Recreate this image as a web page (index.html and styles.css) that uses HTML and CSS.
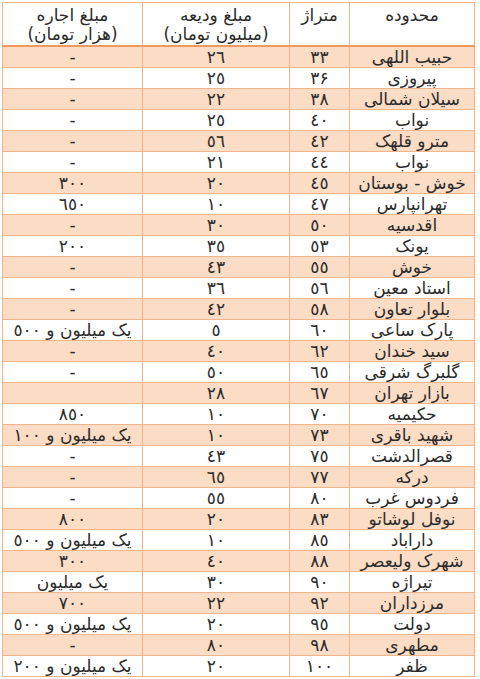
FILE: index.html
```html
<!DOCTYPE html>
<html lang="fa" dir="rtl">
<head>
<meta charset="utf-8">
<link rel="stylesheet" href="styles.css">
</head>
<body>
<table class="prices">
<colgroup>
<col class="c-region"><col class="c-size"><col class="c-dep"><col class="c-rent">
</colgroup>
<thead>
<tr class="head">
<th>محدوده</th>
<th>متراژ</th>
<th>مبلغ ودیعه<br>(میلیون تومان)</th>
<th>مبلغ اجاره<br>(هزار تومان)</th>
</tr>
</thead>
<tbody>
<tr><td>حبیب اللهی</td><td>٣٣</td><td>٢٦</td><td>-</td></tr>
<tr><td>پیروزی</td><td>٣۶</td><td>٢٥</td><td>-</td></tr>
<tr><td>سیلان شمالی</td><td>٣٨</td><td>٢٢</td><td>-</td></tr>
<tr><td>نواب</td><td>٤٠</td><td>٢٥</td><td>-</td></tr>
<tr><td>مترو قلهک</td><td>٤٢</td><td>٥٦</td><td>-</td></tr>
<tr><td>نواب</td><td>٤٤</td><td>٢١</td><td>-</td></tr>
<tr><td>خوش - بوستان</td><td>٤٥</td><td>٢٠</td><td>٣٠٠</td></tr>
<tr><td>تهرانپارس</td><td>٤٧</td><td>١٠</td><td>٦٥٠</td></tr>
<tr><td>اقدسیه</td><td>٥٠</td><td>٣٠</td><td>-</td></tr>
<tr><td>یونک</td><td>٥٣</td><td>٣٥</td><td>٢٠٠</td></tr>
<tr><td>خوش</td><td>٥٥</td><td>٤٣</td><td>-</td></tr>
<tr><td>استاد معین</td><td>٥٦</td><td>٣٦</td><td>-</td></tr>
<tr><td>بلوار تعاون</td><td>٥٨</td><td>٤٢</td><td>-</td></tr>
<tr><td>پارک ساعی</td><td>٦٠</td><td>٥</td><td>یک میلیون و ٥٠٠</td></tr>
<tr><td>سید خندان</td><td>٦٢</td><td>٤٠</td><td>-</td></tr>
<tr><td>گلبرگ شرقی</td><td>٦٥</td><td>٥٠</td><td>-</td></tr>
<tr><td>بازار تهران</td><td>٦٧</td><td>٢٨</td><td></td></tr>
<tr><td>حکیمیه</td><td>٧٠</td><td>١٠</td><td>٨٥٠</td></tr>
<tr><td>شهید باقری</td><td>٧٣</td><td>١٠</td><td>یک میلیون و ١٠٠</td></tr>
<tr><td>قصرالدشت</td><td>٧٥</td><td>٤٣</td><td>-</td></tr>
<tr><td>درکه</td><td>٧٧</td><td>٦٥</td><td>-</td></tr>
<tr><td>فردوس غرب</td><td>٨٠</td><td>٥٥</td><td>-</td></tr>
<tr><td>نوفل لوشاتو</td><td>٨٣</td><td>٢٠</td><td>٨٠٠</td></tr>
<tr><td>داراباد</td><td>٨٥</td><td>١٠</td><td>یک میلیون و ٥٠٠</td></tr>
<tr><td>شهرک ولیعصر</td><td>٨٨</td><td>٤٠</td><td>٣٠٠</td></tr>
<tr><td>تیراژه</td><td>٩٠</td><td>٣٠</td><td>یک میلیون</td></tr>
<tr><td>مرزداران</td><td>٩٢</td><td>٢٢</td><td>٧٠٠</td></tr>
<tr><td>دولت</td><td>٩٥</td><td>٢٠</td><td>یک میلیون و ٥٠٠</td></tr>
<tr><td>مطهری</td><td>٩٨</td><td>٨٠</td><td>-</td></tr>
<tr><td>ظفر</td><td>١٠٠</td><td>٢٠</td><td>یک میلیون و ٢٠٠</td></tr>
</tbody>
</table>
</body>
</html>
```
FILE: styles.css
```css
html, body {
  margin: 0;
  padding: 0;
  background: #ffffff;
}
body {
  padding: 2px 5px 0 3px;
  font-family: "DejaVu Sans", sans-serif;
  font-size: 17px;
  color: #2b2b2b;
}
.prices {
  border-collapse: collapse;
  width: 472px;
  table-layout: fixed;
}
.c-region { width: 125px; }
.c-size { width: 60px; }
.c-dep { width: 147px; }
.c-rent { width: 140px; }
.prices th,
.prices td {
  border: 1px solid #f2b48a;
  padding: 0;
  text-align: center;
  font-weight: normal;
  overflow: hidden;
  white-space: nowrap;
}
.prices th {
  height: 39px;
  vertical-align: top;
  font-size: 17px;
  line-height: 19px;
  padding-top: 3px;
  border-bottom: 2px solid #ee9a5e;
}
.prices td {
  height: 20px;
  line-height: 20px;
}
.prices tbody tr:nth-child(odd) td {
  background: #fbdcc4;
}
```
